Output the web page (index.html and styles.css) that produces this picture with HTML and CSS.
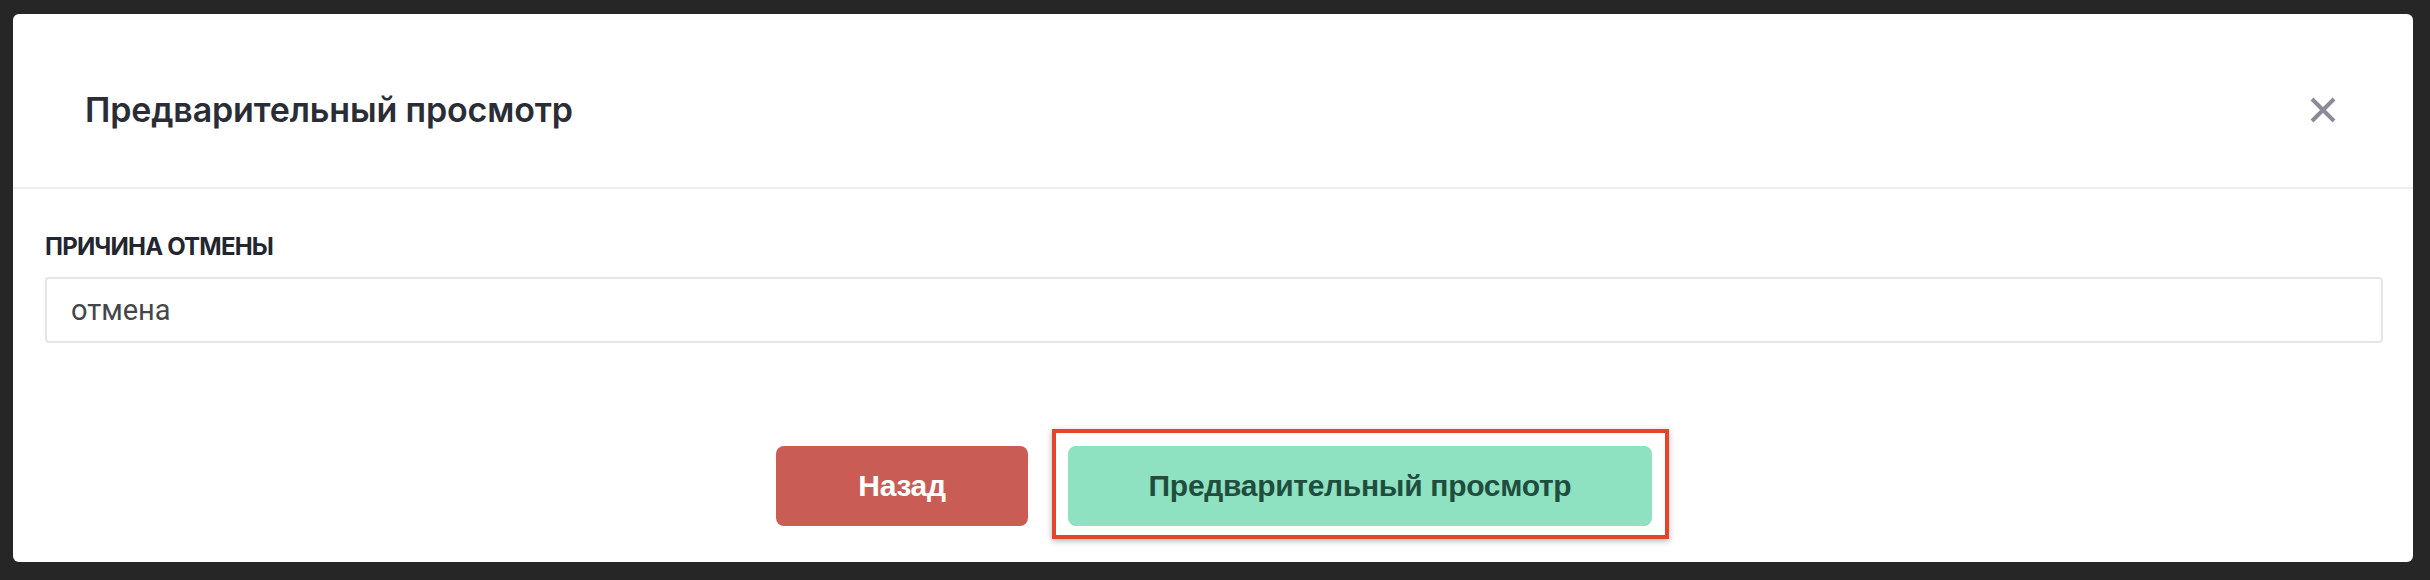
FILE: index.html
```html
<!DOCTYPE html>
<html lang="ru">
<head>
<meta charset="utf-8">
<title>Предварительный просмотр</title>
<link rel="stylesheet" href="styles.css">
</head>
<body>
<div class="modal">
  <div class="modal-header">
    <h2 class="modal-title">Предварительный просмотр</h2>
    <button class="close" aria-label="Закрыть">
      <svg width="26" height="26" viewBox="0 0 26 26"><path d="M2 2 L24 24 M24 2 L2 24" stroke="#8a8b97" stroke-width="4" stroke-linecap="butt"/></svg>
    </button>
  </div>
  <div class="modal-body">
    <label class="field-label">ПРИЧИНА ОТМЕНЫ</label>
    <div class="field-input">отмена</div>
    <div class="actions">
      <button class="btn btn-back">Назад</button>
      <button class="btn btn-preview">Предварительный просмотр</button>
    </div>
  </div>
</div>
</body>
</html>
```
FILE: styles.css
```css
html, body {
  margin: 0;
  padding: 0;
  background: #262626;
}
body {
  height: 580px;
  padding-top: 14px;
  box-sizing: border-box;
  font-family: "Liberation Sans", Arial, sans-serif;
}
.modal {
  margin: 0 17px 0 13px;
  height: 548px;
  background: #ffffff;
  border-radius: 6px;
  box-sizing: border-box;
}
.modal-header {
  height: 175px;
  box-sizing: border-box;
  border-bottom: 2px solid #eceef0;
  display: flex;
  align-items: center;
  justify-content: space-between;
  padding: 18px 77px 0 72px;
}
.modal-title {
  margin: 0;
  font-family: Inter, Roboto, "Liberation Sans", sans-serif;
  font-weight: 600;
  font-size: 34px;
  letter-spacing: -0.15px;
  color: #2a2d35;
}
.close {
  border: 0;
  background: none;
  padding: 0;
  width: 26px;
  height: 26px;
  display: flex;
}
.modal-body {
  padding: 45px 30px 0 32px;
  display: flex;
  flex-direction: column;
}
.field-label {
  font-family: Inter, Roboto, "Liberation Sans", sans-serif;
  font-weight: 700;
  font-size: 24px;
  letter-spacing: -0.8px;
  color: #23262e;
  line-height: 26px;
}
.field-input {
  margin-top: 17px;
  height: 66px;
  box-sizing: border-box;
  border: 2px solid #e3e5e8;
  border-radius: 4px;
  padding: 0 24px;
  display: flex;
  align-items: center;
  font-family: Roboto, "Liberation Sans", sans-serif;
  font-size: 29px;
  color: #44464c;
}
.actions {
  margin-top: 103px;
  display: flex;
  justify-content: center;
  gap: 40px;
}
.btn {
  height: 80px;
  border: 0;
  border-radius: 8px;
  font-family: "Liberation Sans", Arial, sans-serif;
  font-weight: 700;
  font-size: 30px;
  letter-spacing: -0.3px;
}
.btn-back {
  width: 252px;
  background: #c95d55;
  color: #ffffff;
}
.btn-preview {
  width: 584px;
  background: #8ee2c1;
  color: #1f4d3e;
  position: relative;
}
.btn-preview::after {
  content: "";
  position: absolute;
  top: -17px;
  left: -16px;
  right: -17px;
  bottom: -13px;
  border: 4px solid #e6432b;
  box-shadow: 0 2px 6px rgba(0, 0, 0, 0.3);
  pointer-events: none;
}
```
